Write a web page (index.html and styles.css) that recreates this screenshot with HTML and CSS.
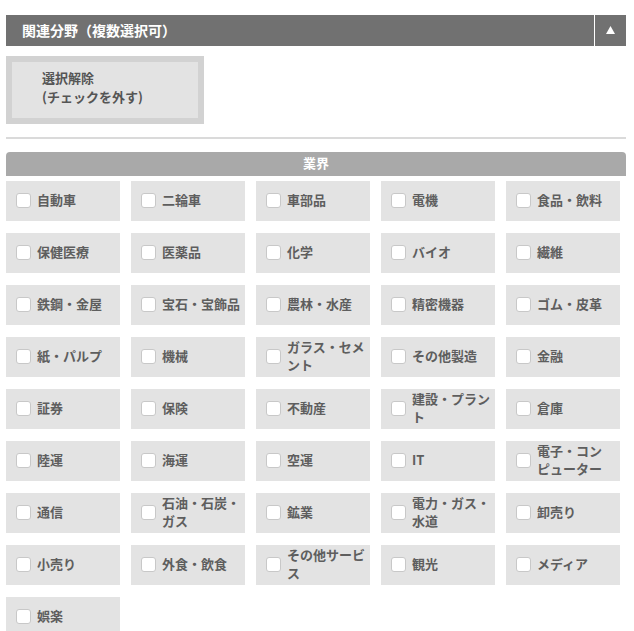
FILE: index.html
```html
<!DOCTYPE html>
<html>
<head>
    <title>関連分野</title>
    <link rel="stylesheet" href="styles.css">
</head>
<body>
    <div class="container">
        <div class="panel-header">
            <h2>関連分野（複数選択可）</h2>
            <button class="toggle-button" type="button">
                <svg width="9" height="8" viewBox="0 0 9 8"><path d="M4.5 0 L9 8 L0 8 Z" fill="#fff"/></svg>
            </button>
        </div>

        <button class="clear-button" type="button">選択解除<br>(チェックを外す)</button>

        <hr class="divider">

        <div class="category">
            <h3 class="category-title">業界</h3>
            <div class="option-grid">
                <label class="option"><input type="checkbox"><span>自動車</span></label>
                <label class="option"><input type="checkbox"><span>二輪車</span></label>
                <label class="option"><input type="checkbox"><span>車部品</span></label>
                <label class="option"><input type="checkbox"><span>電機</span></label>
                <label class="option"><input type="checkbox"><span>食品・飲料</span></label>
                <label class="option"><input type="checkbox"><span>保健医療</span></label>
                <label class="option"><input type="checkbox"><span>医薬品</span></label>
                <label class="option"><input type="checkbox"><span>化学</span></label>
                <label class="option"><input type="checkbox"><span>バイオ</span></label>
                <label class="option"><input type="checkbox"><span>繊維</span></label>
                <label class="option"><input type="checkbox"><span>鉄鋼・金屋</span></label>
                <label class="option"><input type="checkbox"><span>宝石・宝飾品</span></label>
                <label class="option"><input type="checkbox"><span>農林・水産</span></label>
                <label class="option"><input type="checkbox"><span>精密機器</span></label>
                <label class="option"><input type="checkbox"><span>ゴム・皮革</span></label>
                <label class="option"><input type="checkbox"><span>紙・パルプ</span></label>
                <label class="option"><input type="checkbox"><span>機械</span></label>
                <label class="option"><input type="checkbox"><span>ガラス・セメント</span></label>
                <label class="option"><input type="checkbox"><span>その他製造</span></label>
                <label class="option"><input type="checkbox"><span>金融</span></label>
                <label class="option"><input type="checkbox"><span>証券</span></label>
                <label class="option"><input type="checkbox"><span>保険</span></label>
                <label class="option"><input type="checkbox"><span>不動産</span></label>
                <label class="option"><input type="checkbox"><span>建設・プラント</span></label>
                <label class="option"><input type="checkbox"><span>倉庫</span></label>
                <label class="option"><input type="checkbox"><span>陸運</span></label>
                <label class="option"><input type="checkbox"><span>海運</span></label>
                <label class="option"><input type="checkbox"><span>空運</span></label>
                <label class="option"><input type="checkbox"><span>IT</span></label>
                <label class="option"><input type="checkbox"><span>電子・コン<span class="nobr">ピュ</span>ーター</span></label>
                <label class="option"><input type="checkbox"><span>通信</span></label>
                <label class="option"><input type="checkbox"><span>石油・石炭・ガス</span></label>
                <label class="option"><input type="checkbox"><span>鉱業</span></label>
                <label class="option"><input type="checkbox"><span>電力・ガス・水道</span></label>
                <label class="option"><input type="checkbox"><span>卸売り</span></label>
                <label class="option"><input type="checkbox"><span>小売り</span></label>
                <label class="option"><input type="checkbox"><span>外食・飲食</span></label>
                <label class="option"><input type="checkbox"><span>その他サービス</span></label>
                <label class="option"><input type="checkbox"><span>観光</span></label>
                <label class="option"><input type="checkbox"><span>メディア</span></label>
                <label class="option"><input type="checkbox"><span>娯楽</span></label>
            </div>
        </div>
    </div>
</body>
</html>
```

FILE: styles.css
```css
body {
    margin: 0;
    background-color: #fff;
    color: #5e5e5e;
    font-family: "Noto Sans CJK JP", "Liberation Sans", sans-serif;
}

.container {
    padding: 15px 8px 0 6px;
}

.panel-header {
    display: flex;
    height: 31px;
    background-color: #717171;
    color: #fff;
}

.panel-header h2 {
    flex: 1;
    margin: 0;
    padding-left: 16px;
    font-size: 14px;
    font-weight: bold;
    line-height: 31px;
}

.toggle-button {
    display: flex;
    align-items: center;
    justify-content: center;
    width: 32px;
    padding: 0 0 2px;
    border: none;
    border-left: 1px solid #fff;
    background-color: #717171;
    cursor: pointer;
}

.clear-button {
    display: block;
    width: 198px;
    margin-top: 10px;
    padding: 6px 0 12px 30px;
    border: 6px solid #d2d2d2;
    background-color: #e3e3e3;
    color: #555;
    font-family: inherit;
    font-size: 13px;
    font-weight: bold;
    line-height: 19px;
    text-align: left;
    cursor: pointer;
}

.divider {
    margin: 13px 0 0;
    border: none;
    border-top: 2px solid #dadada;
}

.category {
    margin-top: 13px;
}

.category-title {
    margin: 0;
    height: 24px;
    background-color: #a9a9a9;
    border-radius: 4px 4px 0 0;
    color: #fff;
    font-size: 13px;
    font-weight: bold;
    line-height: 22px;
    text-align: center;
}

.option-grid {
    display: grid;
    grid-template-columns: repeat(5, 114px);
    column-gap: 11px;
    row-gap: 12px;
    margin-top: 5px;
}

.option {
    box-sizing: border-box;
    display: flex;
    align-items: center;
    height: 40px;
    padding: 0 4px 2px 10px;
    background-color: #e3e3e3;
    font-size: 13px;
    font-weight: bold;
    line-height: 18px;
    cursor: pointer;
}

.option .nobr {
    white-space: nowrap;
}

.option input {
    flex: none;
    appearance: none;
    width: 15px;
    height: 15px;
    margin: 0 6px 0 0;
    border: 1px solid #c8c8c8;
    border-radius: 3px;
    background-color: #fff;
}

.option input:checked {
    background-color: #717171;
}
```
